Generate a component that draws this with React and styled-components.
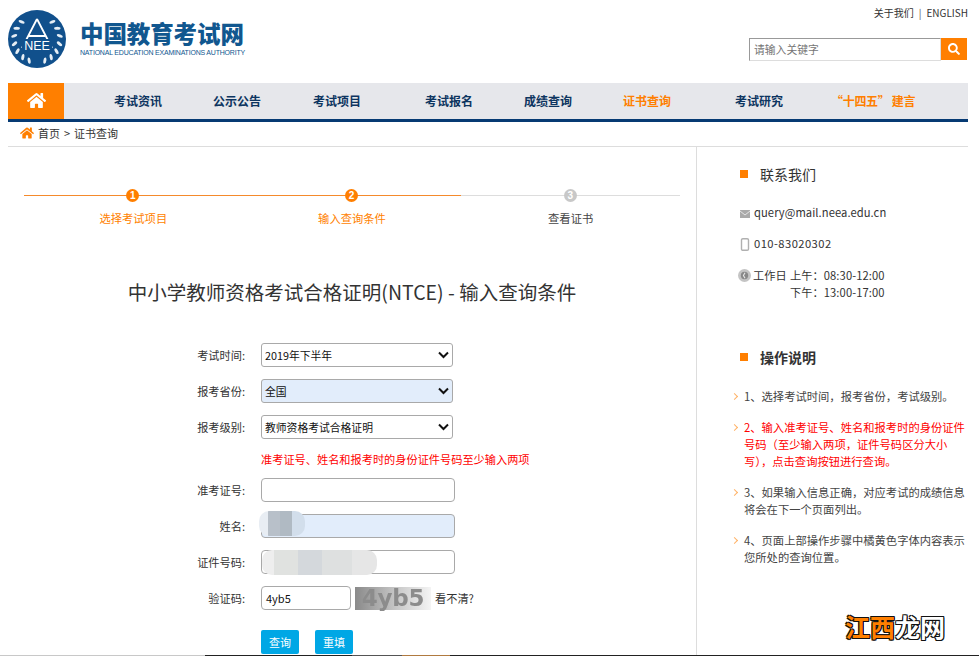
import React from "react";
import styled, { createGlobalStyle } from "styled-components";
import { FaHome, FaSearch } from "react-icons/fa";

const FONT = `"Noto Sans CJK SC", "Open Sans", "Liberation Sans", sans-serif`;
const ORANGE = "#ff7f00";
const NAVY = "#063a73";

const Global = createGlobalStyle`
  html, body { margin: 0; padding: 0; background: #fff; }
  body { font-family: ${FONT}; font-size: 12px; color: #333; overflow: hidden; }
  * { box-sizing: border-box; }
`;

const Page = styled.div`
  position: relative;
  width: 979px;
  height: 656px;
  overflow: hidden;
  display: flex;
  flex-direction: column;
`;

const Wrap = styled.div`
  width: 960px;
  margin-left: 8px;
  display: flex;
  flex-direction: column;
  flex: 1;
  min-height: 0;
`;

const Header = styled.header`
  height: 83px;
  display: flex;
  justify-content: space-between;
`;

const Logo = styled.div`
  display: flex;
  align-items: flex-start;
  padding-top: 10px;
`;

const LogoText = styled.div`
  margin-left: 14px;
  padding-top: 11px;
  color: #11578f;
`;

const LogoName = styled.div`
  font-size: 23.5px;
  line-height: 25px;
  font-weight: 900;
  letter-spacing: -0.1px;
  white-space: nowrap;
`;

const LogoSub = styled.div`
  font-family: "Liberation Sans", sans-serif;
  font-size: 7px;
  line-height: 9px;
  margin-top: 2px;
  white-space: nowrap;
  letter-spacing: -0.2px;
`;

const HeaderRight = styled.div`
  display: flex;
  flex-direction: column;
  align-items: flex-end;
`;

const TopLinks = styled.div`
  padding-top: 5px;
  height: 38px;
  font-size: 10px;
  line-height: 15px;
  color: #333;
  span { margin: 0 5px; color: #555; }
`;

const Search = styled.div`
  display: flex;
  margin-right: 1px;
`;

const SearchInput = styled.div`
  width: 192px;
  height: 23px;
  border: 1px solid #ddd;
  border-top-color: #999;
  border-left-color: #999;
  padding-left: 4px;
  font-size: 10.8px;
  line-height: 21px;
  color: #757575;
`;

const SearchButton = styled.div`
  width: 26px;
  height: 22px;
  background: ${ORANGE};
  color: #fff;
  display: flex;
  align-items: center;
  justify-content: center;
  font-size: 12px;
`;

const Nav = styled.nav`
  height: 39px;
  background: #e6e7eb;
  border-bottom: 3px solid ${NAVY};
  display: flex;
`;

const HomeTab = styled.div`
  width: 56px;
  background: ${ORANGE};
  color: #fff;
  display: flex;
  align-items: center;
  justify-content: center;
  font-size: 19px;
  padding-bottom: 2px;
`;

const NavItem = styled.a`
  margin-left: ${(p) => p.$left}px;
  font-size: 12px;
  font-weight: 700;
  line-height: 35px;
  white-space: nowrap;
  letter-spacing: ${(p) => p.$tight || 0}px;
  color: ${(p) => (p.$active ? ORANGE : "#0d3560")};
`;

const Crumb = styled.div`
  height: 25px;
  padding: 0 0 2px 12px;
  border-bottom: 1px solid #ddd;
  display: flex;
  align-items: center;
  font-size: 11px;
  color: #333;
  svg { color: ${ORANGE}; font-size: 14px; margin-right: 4px; }
  i { font-style: normal; margin: 0 4px; }
`;

const Body = styled.div`
  flex: 1;
  min-height: 0;
  display: flex;
`;

const Main = styled.main`
  width: 689px;
  border-right: 1px solid #ddd;
  padding: 48px 16px 0;
`;

const Steps = styled.div`
  width: 656px;
  display: grid;
  grid-template-columns: repeat(3, 1fr);
`;

const Step = styled.div`
  position: relative;
  border-top: 1px solid ${(p) => (p.$on ? "#f58a2c" : "#ddd")};
  padding-top: 13px;
  height: 34px;
  text-align: center;
  font-size: 11.3px;
  line-height: 18px;
  color: ${(p) => (p.$on ? ORANGE : "#444")};
`;

const StepDot = styled.b`
  position: absolute;
  left: 50%;
  top: -7px;
  width: 13px;
  height: 13px;
  margin-left: -7px;
  border-radius: 50%;
  background: ${(p) => (p.$on ? ORANGE : "#c8c8c8")};
  color: #fff;
  font: 700 10px/13px "Liberation Sans", sans-serif;
  text-align: center;
`;

const Title = styled.h1`
  margin: 48px 0 0;
  width: 656px;
  text-align: center;
  font-size: 19.5px;
  line-height: 30px;
  font-weight: 400;
  color: #333;
`;

const Form = styled.div`
  margin-top: 30px;
  display: flex;
  flex-direction: column;
`;

const Row = styled.div`
  position: relative;
  display: flex;
  align-items: center;
  height: 36px;
`;

const Label = styled.label`
  width: 237px;
  padding-right: 16px;
  text-align: right;
  font-size: 11.2px;
  color: #333;
`;

const Select = styled.div`
  position: relative;
  width: 192px;
  height: 24px;
  border: 1px solid #a9a9a9;
  border-radius: 3px;
  background: ${(p) => (p.$filled ? "#e2edfb" : "#fff")};
  padding-left: 3px;
  font-size: 10.8px;
  line-height: 22px;
  color: #111;
  svg { position: absolute; right: 3px; top: 7px; }
`;

const Input = styled.div`
  width: ${(p) => p.$width || 194}px;
  height: 24px;
  border: 1px solid #a9a9a9;
  border-radius: 4px;
  background: ${(p) => (p.$filled ? "#e2edfb" : "#fff")};
  padding-left: 4px;
  font-size: 11px;
  line-height: 22px;
  color: #111;
`;

const Hint = styled.div`
  padding: 5px 0 0 237px;
  height: 27px;
  font-size: 11.2px;
  line-height: 18px;
  color: #f00;
  white-space: nowrap;
`;

// the blurred-out personal data sitting on top of the name and id fields
const Smudge = styled.div`
  position: absolute;
  left: ${(p) => p.$left}px;
  top: ${(p) => p.$top}px;
  width: ${(p) => p.$width}px;
  height: 25px;
  border-radius: 10px;
  background: ${(p) => p.$bg};
`;

const Captcha = styled.div`
  width: 76px;
  height: 23px;
  margin-left: 4px;
  background: linear-gradient(90deg, #8a8a8a, #c8c8c8 55%, #f4f4f4);
  text-align: center;
  font: 700 23px/23px "DejaVu Sans", sans-serif;
  letter-spacing: -0.3px;
  color: #8c8c8c;
  white-space: nowrap;
  filter: blur(0.5px);
`;

const Refresh = styled.span`
  margin-left: 4px;
  font-size: 11.2px;
  color: #333;
`;

const Buttons = styled.div`
  display: flex;
  gap: 16px;
  padding: 14px 0 0 237px;
`;

const Button = styled.div`
  width: 38px;
  height: 24px;
  border-radius: 2px;
  background: #00a7e5;
  color: #fff;
  text-align: center;
  font-size: 11px;
  line-height: 24px;
`;

const Side = styled.aside`
  flex: 1;
  padding: 16px 0 0 36px;
`;

const SideTitle = styled.h3`
  margin: ${(p) => p.$top || 0}px 0 0;
  display: flex;
  align-items: center;
  font-size: 14px;
  line-height: 22px;
  font-weight: ${(p) => (p.$bold ? 700 : 400)};
  color: #333;
  &::before {
    content: "";
    width: 8px;
    height: 8px;
    margin-left: 7px;
    margin-right: 12px;
    background: ${ORANGE};
  }
`;

const Contact = styled.div`
  display: flex;
  align-items: flex-start;
  margin: ${(p) => p.$top}px 0 0 7px;
  font-size: 11.2px;
  line-height: 17px;
  color: #333;
  letter-spacing: ${(p) => p.$spacing || 0}px;
  white-space: nowrap;
  svg { flex: none; margin-right: 4px; }
`;

const Hours = styled.div`
  display: grid;
  grid-template-columns: auto auto;
  column-gap: 3px;
  span:nth-child(3) { grid-column: 2; }
`;

const TipList = styled.ul`
  list-style: none;
  margin: 20px 0 0;
  padding: 0 0 0 1px;
`;

const Tip = styled.li`
  position: relative;
  padding-left: 10px;
  margin-bottom: 14px;
  width: 232px;
  font-size: 11.3px;
  line-height: 17px;
  color: ${(p) => (p.$red ? "#f00" : "#444")};
  &::before {
    content: "";
    position: absolute;
    left: -2px;
    top: 6px;
    width: 4px;
    height: 4px;
    border-top: 1px solid #ffb266;
    border-right: 1px solid #ffb266;
    transform: rotate(45deg);
  }
`;

const BottomEdge = styled.div`
  height: 1px;
  flex: none;
  display: flex;
`;

const EdgePart = styled.div`
  width: ${(p) => p.$w}px;
  flex: ${(p) => (p.$w ? "none" : 1)};
  background: ${(p) => p.$c};
`;

const Watermark = styled.div`
  position: absolute;
  left: 845px;
  top: 611px;
  font-size: 25px;
  line-height: 30px;
  font-weight: 700;
  color: #fff;
  white-space: nowrap;
  text-shadow: -1px -1px 0 #111, 1px -1px 0 #111, -1px 1px 0 #111, 1px 1px 0 #111, 0 1px 0 #111, 1px 0 0 #111;
  em { font-style: normal; color: ${ORANGE}; }
`;

const Chevron = () => (
  <svg width="11" height="8" viewBox="0 0 11 8">
    <path d="M1 1.5 L5.5 6 L10 1.5" fill="none" stroke="#111" strokeWidth="2" />
  </svg>
);

// wreath leaves, in degrees clockwise from the top of the seal
const leafAngles = [42, 62, 82, 102, 122, 142, 160];

const NeeaMark = () => (
  <svg width="58" height="58" viewBox="0 0 58 58">
    <circle cx="29" cy="29" r="29" fill="#11508c" />
    <path d="M29 9 L14 38 M29 9 L44 38 M21 26 H37" fill="none" stroke="#fff" strokeWidth="1.8" />
    <rect x="14" y="29" width="30" height="12" fill="#11508c" />
    <text x="29" y="40" textAnchor="middle" fontFamily="Liberation Sans" fontSize="12.5" fill="#fff">NEE</text>
    {leafAngles.map((a) => (
      <g key={a} fill="#e6eef5">
        <ellipse cx="29" cy="6" rx="1.5" ry="3.2" transform={`rotate(${a} 29 29) rotate(28 29 6)`} />
        <ellipse cx="29" cy="6" rx="1.5" ry="3.2" transform={`rotate(${-a} 29 29) rotate(-28 29 6)`} />
      </g>
    ))}
  </svg>
);

const MailIcon = () => (
  <svg width="10" height="8" viewBox="0 0 10 8" style={{ marginTop: 6 }}>
    <rect width="10" height="8" fill="#aaa" />
    <path d="M0 1 L5 5 L10 1" fill="none" stroke="#e4e4e4" strokeWidth="1" />
  </svg>
);

const PhoneIcon = () => (
  <svg width="10" height="13" viewBox="0 0 10 13" style={{ marginTop: 3 }}>
    <rect x="1.5" y="0.7" width="7" height="11.6" rx="1.3" fill="#fff" stroke="#b0b0b0" strokeWidth="1.4" />
  </svg>
);

const ClockIcon = () => (
  <svg width="13" height="13" viewBox="0 0 12 12" style={{ margin: "2px 2px 0 -2px" }}>
    <circle cx="6" cy="6" r="6" fill="#c4c4c4" />
    <circle cx="6" cy="6" r="3.4" fill="#888" />
    <path d="M6.5 3.5 L5 6 L6.5 8.5" fill="none" stroke="#e8e8e8" strokeWidth="1" />
  </svg>
);

const navItems = [
  { text: "考试资讯", left: 50 },
  { text: "公示公告", left: 51 },
  { text: "考试项目", left: 52 },
  { text: "考试报名", left: 64 },
  { text: "成绩查询", left: 51 },
  { text: "证书查询", left: 51, active: true },
  { text: "考试研究", left: 64 },
  { text: "“十四五” 建言", left: 48, active: true, tight: -0.35 },
];

const nameBlur = "linear-gradient(90deg, #e8edf3 0 9px, #b8c0c9 9px 21px, #b0bac3 21px 33px, #d2deeb 33px)";
const idBlur = "linear-gradient(90deg, #eeeeee 0 12px, #e0e2e0 12px 36px, #d4d8dc 36px 60px, #dee0e0 60px 90px, #e6e6e6 90px)";

export default function App() {
  return (
    <Page>
      <Global />
      <Wrap>
        <Header>
          <Logo>
            <NeeaMark />
            <LogoText>
              <LogoName>中国教育考试网</LogoName>
              <LogoSub>NATIONAL EDUCATION EXAMINATIONS AUTHORITY</LogoSub>
            </LogoText>
          </Logo>
          <HeaderRight>
            <TopLinks>
              关于我们<span>|</span>ENGLISH
            </TopLinks>
            <Search>
              <SearchInput>请输入关键字</SearchInput>
              <SearchButton><FaSearch /></SearchButton>
            </Search>
          </HeaderRight>
        </Header>

        <Nav>
          <HomeTab><FaHome /></HomeTab>
          {navItems.map((item) => (
            <NavItem key={item.text} $left={item.left} $active={item.active} $tight={item.tight}>{item.text}</NavItem>
          ))}
        </Nav>

        <Crumb>
          <FaHome />首页<i>&gt;</i>证书查询
        </Crumb>

        <Body>
          <Main>
            <Steps>
              <Step $on><StepDot $on>1</StepDot>选择考试项目</Step>
              <Step $on><StepDot $on>2</StepDot>输入查询条件</Step>
              <Step><StepDot>3</StepDot>查看证书</Step>
            </Steps>

            <Title>中小学教师资格考试合格证明(NTCE) - 输入查询条件</Title>

            <Form>
              <Row>
                <Label>考试时间:</Label>
                <Select>2019年下半年<Chevron /></Select>
              </Row>
              <Row>
                <Label>报考省份:</Label>
                <Select $filled>全国<Chevron /></Select>
              </Row>
              <Row>
                <Label>报考级别:</Label>
                <Select>教师资格考试合格证明<Chevron /></Select>
              </Row>
              <Hint>准考证号、姓名和报考时的身份证件号码至少输入两项</Hint>
              <Row>
                <Label>准考证号:</Label>
                <Input />
              </Row>
              <Row>
                <Label>姓名:</Label>
                <Input $filled />
                <Smudge $left={235} $top={3} $width={46} $bg={nameBlur} />
              </Row>
              <Row>
                <Label>证件号码:</Label>
                <Input />
                <Smudge $left={238} $top={6} $width={115} $bg={idBlur} />
              </Row>
              <Row>
                <Label>验证码:</Label>
                <Input $width={90}>4yb5</Input>
                <Captcha>4yb5</Captcha>
                <Refresh>看不清?</Refresh>
              </Row>
              <Buttons>
                <Button>查询</Button>
                <Button>重填</Button>
              </Buttons>
            </Form>
          </Main>

          <Side>
            <SideTitle>联系我们</SideTitle>
            <Contact $top={19} $spacing={0.07}><MailIcon />query@mail.neea.edu.cn</Contact>
            <Contact $top={14} $spacing={0.45}><PhoneIcon />010-83020302</Contact>
            <Contact $top={15} $spacing={0.1}>
              <ClockIcon />
              <Hours>
                <span>工作日</span>
                <span>上午：08:30-12:00</span>
                <span>下午：13:00-17:00</span>
              </Hours>
            </Contact>
            <SideTitle $bold $top={45}>操作说明</SideTitle>
            <TipList>
              <Tip>1、选择考试时间，报考省份，考试级别。</Tip>
              <Tip $red>2、输入准考证号、姓名和报考时的身份证件号码（至少输入两项，证件号码区分大小写），点击查询按钮进行查询。</Tip>
              <Tip>3、如果输入信息正确，对应考试的成绩信息将会在下一个页面列出。</Tip>
              <Tip>4、页面上部操作步骤中橘黄色字体内容表示您所处的查询位置。</Tip>
            </TipList>
          </Side>
        </Body>
      </Wrap>

      <BottomEdge>
        <EdgePart $w={205} $c="#c8c8c8" />
        <EdgePart $w={147} $c="#222" />
        <EdgePart $w={50} $c="#555" />
        <EdgePart $w={48} $c="#b07a40" />
        <EdgePart $c="#222" />
      </BottomEdge>

      <Watermark><em>江西</em>龙网</Watermark>
    </Page>
  );
}
